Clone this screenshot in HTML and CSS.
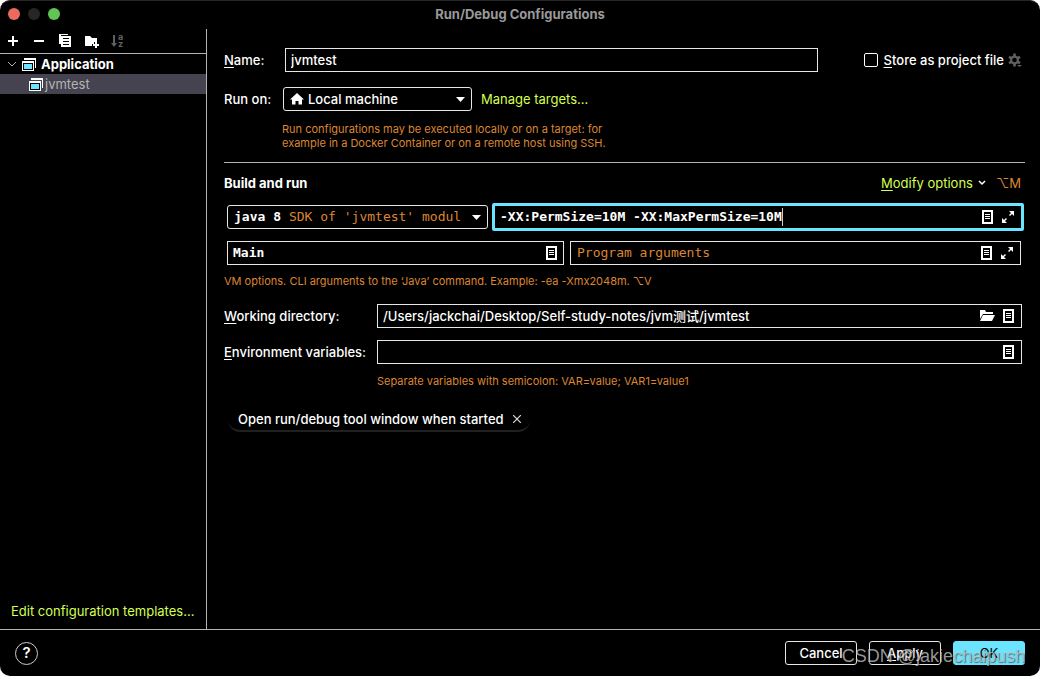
FILE: index.html
```html
<!DOCTYPE html>
<html lang="en">
<head>
    <meta charset="UTF-8">
    <meta name="viewport" content="width=device-width, initial-scale=1.0">
    <title>Run/Debug Configurations</title>
    <link rel="stylesheet" href="styles.css">
</head>
<body>
    <svg class="sprite" aria-hidden="true">
        <symbol id="icon-app" viewBox="0 0 14 13">
            <path d="M2 0h12v10h-1V2H2z" fill="#fff"/>
            <path d="M0 3h12v10H0z" fill="#fff"/>
            <path d="M1 5h10v7H1z" fill="#000"/>
            <path d="M2 6h8v5H2z" fill="#6ae4ff"/>
        </symbol>
        <symbol id="icon-list" viewBox="0 0 11 14">
            <path d="M0 0h11v14H0z" fill="#fff"/>
            <path d="M2 2h7v10H2z" fill="#000"/>
            <path d="M3 4h5v1H3zM3 6h5v1H3zM3 8h5v1H3z" fill="#fff"/>
        </symbol>
        <symbol id="icon-expand" viewBox="0 0 12 12">
            <path d="M7 0h5v5l-2-2-2 2-1-1 2-2zM0 7l2 2 2-2 1 1-2 2 2 2H0z" fill="#fff"/>
        </symbol>
        <symbol id="icon-arrow" viewBox="0 0 9 5">
            <path d="M0 0h9L4.500 5z" fill="#fff"/>
        </symbol>
    </svg>

    <div class="window">
        <header class="titlebar">
            <div class="lights">
                <span class="light close"></span>
                <span class="light minimize"></span>
                <span class="light zoom"></span>
            </div>
            <h1>Run/Debug Configurations</h1>
        </header>

        <div class="content">
            <aside class="sidebar">
                <div class="toolbar">
                    <button type="button" aria-label="Add">
                        <svg width="16" height="16"><path d="M7 3h2v4h4v2H9v4H7V9H3V7h4z" fill="#fff"/></svg>
                    </button>
                    <button type="button" aria-label="Remove">
                        <svg width="16" height="16"><path d="M3 7h10v2H3z" fill="#fff"/></svg>
                    </button>
                    <button type="button" aria-label="Copy">
                        <svg width="16" height="16"><path d="M2 1h9v1H4v9H2z" fill="#fff"/><path d="M4 3h10v11H4z" fill="#fff"/><path d="M6 5h6v1H6zM6 8h6v1H6zM6 11h6v1H6z" fill="#000"/></svg>
                    </button>
                    <button type="button" aria-label="New folder">
                        <svg width="16" height="16"><path d="M2 3h5l2 2h5v4h-3v2H9v2H2z" fill="#fff"/><path d="M12 9h2v2h2v2h-2v2h-2v-2h-2v-2h2V9z" fill="#fff"/></svg>
                    </button>
                    <button type="button" aria-label="Sort" disabled>
                        <svg width="16" height="16"><path d="M4 2h2v8h2l-3 4-3-4h2z" fill="#606060"/><text x="9" y="7" class="sort-letter">a</text><text x="9" y="14" class="sort-letter">z</text></svg>
                    </button>
                </div>
                <ul class="tree">
                    <li class="node group">
                        <svg width="10" height="6"><path d="M1 1l4 4 4-4" fill="none" stroke="#aaa"/></svg>
                        <svg width="14" height="13"><use href="#icon-app"/></svg>
                        <span>Application</span>
                    </li>
                    <li class="node leaf">
                        <svg width="14" height="13"><use href="#icon-app"/></svg>
                        <span>jvmtest</span>
                    </li>
                </ul>
                <a href="#" class="templates">Edit configuration templates...</a>
            </aside>

            <main class="form">
                <div class="row">
                    <label class="short" for="name"><u>N</u>ame:</label>
                    <div class="field name-field"><input type="text" id="name" value="jvmtest"></div>
                    <div class="store">
                        <input type="checkbox" id="store">
                        <label for="store"><u>S</u>tore as project file</label>
                        <svg width="14" height="14" viewBox="0 0 14 14">
                            <path d="M6.500 .5v13M1 3.800l11 6.400M1 10.200L12 3.800" stroke="#606060" stroke-width="2.600"/>
                            <circle cx="6.500" cy="7" r="3.400" fill="#000" stroke="#606060" stroke-width="2.200"/>
                            <path d="M8 11h6v3H8z" fill="#000"/>
                            <path d="M9 12h5l-2.500 2z" fill="#606060"/>
                        </svg>
                    </div>
                </div>

                <div class="row run-row">
                    <label class="short" for="target">Run on:</label>
                    <div class="combo target">
                        <svg width="14" height="12"><path d="M7 0l7 6.500h-2V11.500H8.500V8h-3v3.500H2v-5H0z" fill="#fff"/></svg>
                        <select id="target"><option>Local machine</option></select>
                        <svg width="9" height="5"><use href="#icon-arrow"/></svg>
                    </div>
                    <a href="#">Manage targets...</a>
                </div>
                <p class="hint target-hint">Run configurations may be executed locally or on a target: for example in a Docker Container or on a remote host using SSH.</p>

                <hr>

                <div class="section-head">
                    <h2>Build and run</h2>
                    <a href="#"><u>M</u>odify options</a>
                    <svg width="8" height="6"><path d="M1 1l3 3 3-3" fill="none" stroke="#fff" stroke-width="1.500"/></svg>
                    <kbd>⌥M</kbd>
                </div>

                <div class="options mono">
                    <div class="combo jdk">
                        <label for="jdk">java 8</label>
                        <select id="jdk"><option>SDK of 'jvmtest' modul</option></select>
                        <svg width="9" height="5"><use href="#icon-arrow"/></svg>
                    </div>
                    <div class="field focused">
                        <input type="text" class="vm" aria-label="VM options" value="-XX:PermSize=10M -XX:MaxPermSize=10M">
                        <span class="caret"></span>
                        <svg class="push" width="11" height="14"><use href="#icon-list"/></svg>
                        <svg width="12" height="12"><use href="#icon-expand"/></svg>
                    </div>
                </div>

                <div class="arguments mono">
                    <div class="field main-class">
                        <input type="text" aria-label="Main class" value="Main">
                        <svg width="11" height="14"><use href="#icon-list"/></svg>
                    </div>
                    <div class="field args">
                        <input type="text" aria-label="Program arguments" placeholder="Program arguments">
                        <svg width="11" height="14"><use href="#icon-list"/></svg>
                        <svg width="12" height="12"><use href="#icon-expand"/></svg>
                    </div>
                </div>
                <p class="hint vm-hint">VM options. CLI arguments to the ‘Java’ command. Example: -ea -Xmx2048m. ⌥V</p>

                <div class="row wide">
                    <label class="long" for="workdir"><u>W</u>orking directory:</label>
                    <div class="field">
                        <input type="text" id="workdir" value="/Users/jackchai/Desktop/Self-study-notes/jvm测试/jvmtest">
                        <svg width="15" height="12"><path d="M0 0h5l1 2h7v2H3L0 9z" fill="#fff"/><path d="M3 5h12l-3 6H0z" fill="#fff"/></svg>
                        <svg width="11" height="14"><use href="#icon-list"/></svg>
                    </div>
                </div>
                <div class="row wide">
                    <label class="long" for="env"><u>E</u>nvironment variables:</label>
                    <div class="field">
                        <input type="text" id="env">
                        <svg width="11" height="14"><use href="#icon-list"/></svg>
                    </div>
                </div>
                <p class="hint env-hint">Separate variables with semicolon: VAR=value; VAR1=value1</p>

                <div class="tag">
                    <span>Open run/debug tool window when started</span>
                    <button type="button" aria-label="Remove option">
                        <svg width="8" height="8"><path d="M0 0l8 8M8 0L0 8" stroke="#ddd" stroke-width="1.200"/></svg>
                    </button>
                </div>
            </main>
        </div>

        <footer class="footer">
            <button type="button" class="help" aria-label="Help">?</button>
            <button type="button" class="btn">Cancel</button>
            <button type="button" class="btn"><u>A</u>pply</button>
            <button type="button" class="btn primary">OK</button>
            <span class="watermark">CSDN @jakiechaipush</span>
        </footer>
    </div>
</body>
</html>
```
FILE: styles.css
```css
* {
    box-sizing: border-box;
}
body {
    margin: 0;
    background-color: #fff;
    color: #fff;
    font-family: Inter, "Noto Sans CJK SC", sans-serif;
    font-size: 13px;
    font-weight: 500;
    line-height: 16px;
}
h1, h2, p, ul {
    margin: 0;
    padding: 0;
}
svg {
    display: block;
    flex: none;
}
u {
    text-underline-offset: 2px;
}
a {
    color: #d4ff4f;
    font-weight: 400;
    text-decoration: none;
}
button, input, select {
    font: inherit;
    color: inherit;
    margin: 0;
    padding: 0;
    border: 0;
    background: none;
    outline: none;
}
.sprite {
    display: none;
}
.window {
    display: flex;
    flex-direction: column;
    min-height: 100vh;
    background-color: #000;
    border-top: 1px solid #262626;
    border-radius: 10px;
    overflow: hidden;
}

/* title bar */
.titlebar {
    display: grid;
    grid-template-columns: 1fr auto 1fr;
    align-items: center;
    height: 28px;
    padding: 0 8px 2px;
}
.titlebar h1 {
    color: #999;
    font-size: 13px;
    font-weight: 700;
}
.lights {
    display: flex;
    gap: 8px;
}
.light {
    width: 12px;
    height: 12px;
    border-radius: 50%;
}
.close {
    background-color: #ed6a5e;
}
.minimize {
    background-color: #262626;
}
.zoom {
    background-color: #61c554;
}

.content {
    display: flex;
    flex: 1;
}

/* sidebar */
.sidebar {
    display: flex;
    flex-direction: column;
    width: 207px;
    border-right: 1px solid #b4b4b4;
}
.toolbar {
    display: flex;
    align-items: center;
    gap: 10px;
    height: 25px;
    padding: 0 5px;
    border-bottom: 1px solid #b4b4b4;
}
.sort-letter {
    fill: #606060;
    font-size: 9px;
    font-weight: 700;
}
.tree {
    flex: 1;
    list-style: none;
}
.node {
    display: flex;
    align-items: center;
    height: 20px;
}
.group {
    gap: 5px;
    padding-left: 7px;
    font-weight: 700;
}
.leaf {
    gap: 2px;
    padding-left: 29px;
    background-color: #44434f;
    color: #b4b4b4;
    font-weight: 400;
}
.templates {
    padding: 0 11px 10px;
}

/* form */
.form {
    flex: 1;
    min-width: 0;
    padding: 19px 15px 0 17px;
}
.row {
    display: flex;
    align-items: center;
}
.short {
    width: 59px;
}
.long {
    width: 153px;
}
.field, .combo {
    display: flex;
    align-items: center;
    flex: 1;
    gap: 8px;
    min-width: 0;
    height: 24px;
    padding: 0 7px 0 5px;
    border: 1px solid #e6e6e6;
}
.field input {
    flex: 1;
    min-width: 0;
}
.name-field {
    margin-left: 2px;
}
.combo {
    gap: 4px;
    border-radius: 3px;
}
.combo select {
    flex: 1;
    min-width: 0;
    appearance: none;
}
.store {
    display: flex;
    align-items: center;
    gap: 4px;
    margin: 0 3px 0 46px;
}
.store input {
    appearance: none;
    width: 14px;
    height: 14px;
    border: 1px solid #fff;
    border-radius: 2px;
}
.store label {
    margin-left: 2px;
}
.run-row {
    margin-top: 15px;
}
.target {
    flex: none;
    width: 189px;
    margin-right: 9px;
    padding: 0 6px;
}
.hint {
    color: #dc8632;
    font-size: 11px;
    font-weight: 400;
    line-height: 14px;
}
.target-hint {
    width: 400px;
    margin-top: 11px;
    padding: 0 16px 0 58px;
}
hr {
    height: 1px;
    margin: 12px 0;
    border: 0;
    background-color: #b4b4b4;
}
.section-head {
    display: flex;
    align-items: center;
    padding-right: 4px;
}
.section-head h2 {
    flex: 1;
    font-size: 13px;
    font-weight: 700;
}
.section-head svg {
    margin: 0 10px 0 5px;
}
.section-head kbd {
    color: #dc8632;
    font-family: inherit;
    font-weight: 400;
}
.mono {
    font-family: "DejaVu Sans Mono", monospace;
    font-weight: 700;
}
.options {
    display: flex;
    align-items: center;
    gap: 4px;
    margin-top: 12px;
    padding: 0 1px 0 3px;
}
.jdk {
    flex: none;
    width: 261px;
    padding: 0 6px;
}
.jdk label {
    padding-right: 4px;
}
.jdk select {
    color: #dc8632;
    font-weight: 400;
}
.focused {
    height: 28px;
    border: 3px solid #6ae4ff;
    border-radius: 2px;
    gap: 9px;
}
.field .vm {
    flex: none;
    width: 36ch;
}
.caret {
    width: 1px;
    height: 18px;
    margin-left: -9px;
    background-color: #ccc;
}
.push {
    margin-left: auto;
}
.arguments {
    display: grid;
    grid-template-columns: 337fr 451fr;
    gap: 6px;
    margin-top: 10px;
    padding: 0 4px 0 3px;
}
.main-class {
    padding-right: 6px;
}
.args {
    gap: 9px;
    padding-left: 6px;
}
.args input::placeholder {
    color: #dc8632;
    font-weight: 400;
    opacity: 1;
}
.vm-hint {
    margin: 9px 0 16px;
}
.wide {
    margin-bottom: 12px;
    padding-right: 3px;
}
.env-hint {
    margin: -2px 0 19px 153px;
}
.tag {
    display: inline-flex;
    align-items: center;
    gap: 9px;
    height: 25px;
    margin-left: 4px;
    padding: 0 9px 0 10px;
    border-bottom: 2px solid #202020;
    border-radius: 12px;
}

/* footer */
.footer {
    position: relative;
    display: flex;
    align-items: center;
    gap: 12px;
    height: 47px;
    padding: 0 15px;
    border-top: 1px solid #b4b4b4;
}
.help {
    width: 23px;
    height: 23px;
    margin-right: auto;
    border: 1px solid #ccc;
    border-radius: 50%;
    font-size: 15px;
    font-weight: 600;
}
.btn {
    width: 72px;
    height: 24px;
    border: 1px solid #e6e6e6;
    border-radius: 3px;
}
.primary {
    border-color: #6ae4ff;
    background-color: #6ae4ff;
    color: #000;
    font-weight: 400;
}
.watermark {
    position: absolute;
    right: 15px;
    bottom: 9px;
    color: rgba(200, 200, 200, 0.75);
    font-family: "Liberation Sans", Arial, sans-serif;
    font-size: 18px;
    font-weight: 400;
    line-height: 22px;
    text-shadow: 1px 1px 1px rgba(0, 0, 0, 0.5);
    pointer-events: none;
}
```
